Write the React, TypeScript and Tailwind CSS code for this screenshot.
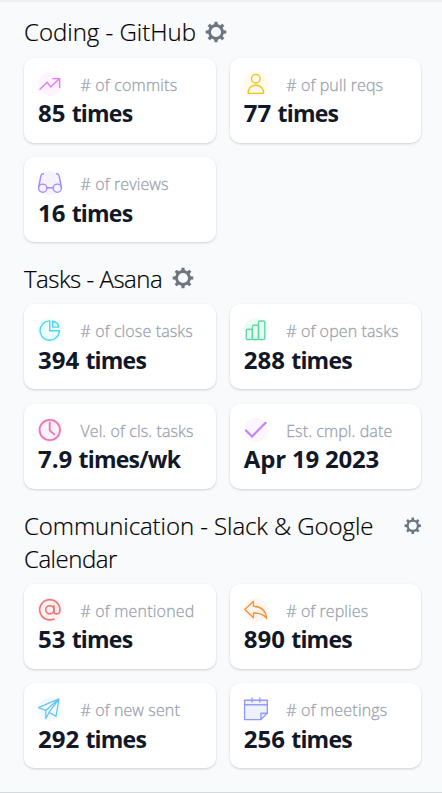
import type { ReactNode } from "react";

function Gear({ className }: { className: string }) {
  return (
    <svg viewBox="0 0 22 22" className={className + " shrink-0 text-[#6b7780]"} fill="none" stroke="currentColor">
      <circle cx="11" cy="11" r="6.5" strokeWidth="2.9" />
      {[0, 45, 90, 135, 180, 225, 270, 315].map((a) => (
        <path key={a} d="M9.2 4.3 9.5 .7h3l.3 3.6z" fill="currentColor" stroke="none" transform={`rotate(${a} 11 11)`} />
      ))}
    </svg>
  );
}

function Icon({ className, disc = true, width = 1.4, children }: { className: string; disc?: boolean; width?: number; children: ReactNode }) {
  return (
    <svg viewBox="0 0 24 24" className={"size-6 shrink-0 overflow-visible " + className} fill="none" strokeWidth={width} strokeLinecap="round" strokeLinejoin="round">
      {disc && <circle cx="12" cy="12" r="12" fill="currentColor" stroke="none" />}
      {children}
    </svg>
  );
}

function Card({ icon, label, tracking, children }: { icon: ReactNode; label: string; tracking: string; children: ReactNode }) {
  return (
    <div className="flex h-[85.3px] flex-col rounded-[10px] bg-white px-[14px] pt-[14px] shadow-[0_1px_3px_rgba(0,0,0,0.1),0_1px_2px_rgba(0,0,0,0.08)]">
      <div className="flex h-6 items-center gap-[18.4px]">
        {icon}
        <span className={"whitespace-nowrap pt-[2px] text-[16px] leading-6 font-light text-[#9ca3af] [-webkit-text-stroke:0.3px_#9ca3af] " + tracking}>{label}</span>
      </div>
      <div className="-mt-[0.3px] h-9 whitespace-pre text-[24px] leading-9 font-bold text-[#111827]">{children}</div>
    </div>
  );
}

function Times({ n, unit = "times" }: { n: string; unit?: string }) {
  return (
    <>
      <span>{n} </span>
      <span className="text-[23px] tracking-[-0.8px]">{unit}</span>
    </>
  );
}

const grid = "mt-[8.7px] grid grid-cols-2 gap-[14.2px]";
const title = "text-[24px] leading-[33px] font-light text-black [-webkit-text-stroke:0.2px_#000]";

export default function App() {
  return (
    <main className="h-[793px] w-[442px] overflow-hidden border-t-2 border-b border-t-[#eeeff1] border-b-[#d5d8dc] bg-[#f9fafc] pr-[20.6px] pl-6 font-['Open_Sans','Noto_Sans',sans-serif]">
      <section className="mt-[14px]">
        <div className="flex items-center gap-[10px]">
          <h2 className={title + " -mt-px mb-px w-[171px] whitespace-nowrap tracking-[0px]"}>Coding - GitHub</h2>
          <Gear className="-mt-[2px] size-[22px]" />
        </div>
        <div className={grid}>
          <Card label="# of commits" tracking="tracking-[0.2px]" icon={
            <Icon className="text-[#fdf4ff] stroke-[#e879f9]"><path d="M2 17.3 9 10.3l3.7 4.7L21.3 6.7M15 6.6h6.6v8.8" strokeLinecap="square" strokeLinejoin="miter" /></Icon>
          }><Times n="85" /></Card>
          <Card label="# of pull reqs" tracking="tracking-[0.13px]" icon={
            <Icon className="text-[#fffbeb] stroke-[#fbbf24]"><circle cx="11.8" cy="6.7" r="4.3" /><path d="M4.1 21.4h15.5c0-5.2-3.4-8.2-7.8-8.2s-7.7 3-7.7 8.2z" /></Icon>
          }><Times n="77" /></Card>
          <Card label="# of reviews" tracking="tracking-[0.13px]" icon={
            <Icon className="text-[#f5f3ff] stroke-[#a78bfa]"><circle cx="4.7" cy="17.2" r="4.1" /><circle cx="19.3" cy="17.2" r="4.1" /><path d="M8.8 16.7h6.4M.8 15.5 3 4.5Q3.5 2.7 5.5 2.8M23.2 15.5 21 4.5q-.5-1.8-2.5-1.7" /></Icon>
          }><Times n="16" /></Card>
        </div>
      </section>

      <section className="mt-[20px]">
        <div className="flex items-center gap-[10px]">
          <h2 className={title + " w-[138px] whitespace-nowrap tracking-[-0.5px]"}>Tasks - Asana</h2>
          <Gear className="-mt-[2px] size-[22px]" />
        </div>
        <div className={grid}>
          <Card label="# of close tasks" tracking="tracking-[0.13px]" icon={
            <Icon className="text-[#ecfeff] stroke-[#4dd6ee]"><path d="M11.7 2.9v9.9h9.7a9.7 9.7 0 1 1-9.7-9.9z" /><path d="M14.6 3.2v5.9h6.1c-.4-3.3-2.8-5.3-6.1-5.9z" /></Icon>
          }><Times n="394" /></Card>
          <Card label="# of open tasks" tracking="tracking-[0.12px]" icon={
            <Icon className="text-[#ecfdf5] stroke-[#5dd9a4]"><rect x="2.3" y="11.2" width="6.1" height="10.3" rx="1.3" /><rect x="8.4" y="7.2" width="6.1" height="14.3" rx="1.3" /><rect x="14.5" y="3" width="6.3" height="18.5" rx="1.3" /></Icon>
          }><Times n="288" /></Card>
          <Card label="Vel. of cls. tasks" tracking="tracking-[0.11px]" icon={
            <Icon className="text-[#fdf2f8] stroke-[#f472b6]" width={1.8}><circle cx="11.8" cy="12" r="10.2" /><path d="M11.7 4.5v7.8l4.5 4" /></Icon>
          }><Times n="7.9" unit="times/wk" /></Card>
          <Card label="Est. cmpl. date" tracking="tracking-[0.1px]" icon={
            <Icon className="text-[#faf5ff] stroke-[#c084fc]" width={2.2}><path d="m2 12.5 6 6L21.6 4.8" strokeLinejoin="miter" /></Icon>
          }><span className="tracking-[-0.2px]">Apr 19 2023</span></Card>
        </div>
      </section>

      <section className="mt-[20px]">
        <div className="flex items-start justify-between">
          <h2 className={title + " w-[360px] tracking-[-0.07px]"}>
            Communication - Slack &amp; Google <span className="tracking-[-0.5px]">Calendar</span>
          </h2>
          <Gear className="mt-[8px] size-[17.6px]" />
        </div>
        <div className={grid}>
          <Card label="# of mentioned" tracking="tracking-[0.2px]" icon={
            <Icon className="text-[#fef2f2] stroke-[#f87171]" width={1.6}><circle cx="11.8" cy="11.8" r="4.1" /><path d="M15.9 7.7v5.2a3 3 0 0 0 6 0v-1.1a10.1 10.1 0 1 0-6 9.2" /></Icon>
          }><Times n="53" /></Card>
          <Card label="# of replies" tracking="tracking-[0.1px]" icon={
            <Icon className="text-[#fff7ed] stroke-[#fb923c]"><path d="m.8 11.6 8.6-8.3v5c8 .2 12.3 4.5 13.3 12.2-2.4-3.7-6.5-5.6-13.3-5.5v4.7z" /></Icon>
          }><Times n="890" /></Card>
          <Card label="# of new sent" tracking="tracking-[0.13px]" icon={
            <Icon className="text-[#f0f9ff] stroke-[#5cc3f8]" width={1.2}><path d="M.6 10.6 21 1.8l-3 17.5-7-3.9-3.2 6.3v-8.2zM21 1.8 7.8 13.5M21 1.8 11 15.4" /></Icon>
          }><Times n="292" /></Card>
          <Card label="# of meetings" tracking="tracking-[0.2px]" icon={
            <Icon className="stroke-[#939df9]" disc={false}><path d="M.6 3.2h22.7v13l-6.4 6.4H.6z" className="fill-[#eef2ff]" strokeLinejoin="miter" /><path d="M.6 7.8h22.7M16.9 22.4v-6.2h6.2M8 .9v4.2M15.8.9v4.2" /></Icon>
          }><Times n="256" /></Card>
        </div>
      </section>
    </main>
  );
}
